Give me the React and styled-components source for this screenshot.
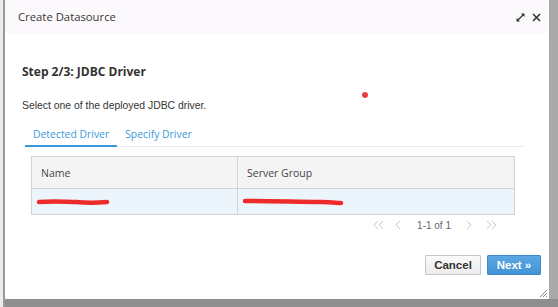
import React from 'react'
import styled, { createGlobalStyle } from 'styled-components'

const GlobalStyle = createGlobalStyle`
  html, body { margin: 0; padding: 0; }
  body {
    width: 558px;
    height: 307px;
    overflow: hidden;
    background: #a3a3a3;
  }
`

const Page = styled.div`
  width: 558px;
  height: 307px;
  display: flex;
  padding-left: 5px;
  box-sizing: border-box;
  background:
    linear-gradient(to right, #ececec 0 3px, #9a9a9a 3px 5px, transparent 5px),
    linear-gradient(to bottom, #a9a9a9 0 299px, #8f8f8f 299px);
`

const Dialog = styled.div`
  position: relative;
  width: 544px;
  height: 299px;
  background: #fff;
  display: flex;
  flex-direction: column;
`

//////////Header/////////////

const Header = styled.div`
  height: 33px;
  flex: none;
  background: #fcf9fc;
  display: flex;
  align-items: center;
  justify-content: space-between;
  padding: 0 8px 0 13px;
`

const Title = styled.span`
  font-family: "Open Sans", sans-serif;
  font-size: 11.3px;
  color: #363636;
`

const HeaderIcons = styled.div`
  display: flex;
  align-items: center;
  gap: 7px;
  padding-top: 2px;
`

//////////Body/////////////

const Body = styled.div`
  flex: 1;
  padding: 0 25px 0 17px;
  display: flex;
  flex-direction: column;
`

const Step = styled.h2`
  margin: 31px 0 0;
  font-family: "Open Sans", sans-serif;
  font-weight: 700;
  font-size: 12px;
  line-height: 16px;
  color: #333;
`

const Hint = styled.p`
  margin: 19px 0 0;
  font-family: "Liberation Sans", Arial, sans-serif;
  font-size: 10.4px;
  line-height: 14px;
  color: #333;
`

const Tabs = styled.div`
  margin: 14px 0 0 3px;
  display: flex;
  border-bottom: 1px solid #ececec;
`

const Tab = styled.div`
  padding: 0 8px 4px;
  margin-bottom: -1px;
  font-family: "Open Sans", sans-serif;
  font-size: 10.4px;
  line-height: 14px;
  color: #3a9ad9;
  border-bottom: 2px solid ${p => (p.$active ? '#3a9ad9' : 'transparent')};
`

const Table = styled.div`
  margin: 9px 9px 0 9px;
  border: 1px solid #d3d3d3;
  display: grid;
  grid-template-columns: 205px 1fr;
`

const Cell = styled.div`
  height: ${p => (p.$head ? '31px' : '25px')};
  display: flex;
  align-items: center;
  padding-left: ${p => (p.$head ? '9px' : '4px')};
  background: ${p => (p.$head ? '#f4f4f4' : '#edf5fc')};
  border-left: ${p => (p.$first ? 'none' : '1px solid #d3d3d3')};
  border-bottom: ${p => (p.$head ? '1px solid #d3d3d3' : 'none')};
  font-family: "Open Sans", sans-serif;
  font-size: 10.5px;
  color: #444;
`

const Pager = styled.div`
  height: 20px;
  display: flex;
  align-items: center;
  justify-content: flex-end;
  padding-right: 27px;
  font-family: "Liberation Sans", Arial, sans-serif;
  font-size: 10px;
  color: #666;
`

const Chevron = styled.svg`
  flex: none;
  margin: ${p => p.$m || '0'};
`

//////////Footer/////////////

const Footer = styled.div`
  display: flex;
  justify-content: flex-end;
  gap: 6px;
  padding: 0 8px 24px 0;
`

const Button = styled.button`
  height: 20px;
  padding: 0;
  width: ${p => (p.$primary ? '54px' : '56px')};
  font-family: "Liberation Sans", Arial, sans-serif;
  font-weight: 700;
  font-size: 11.5px;
  color: ${p => (p.$primary ? '#fff' : '#333')};
  background: ${p =>
    p.$primary ? 'linear-gradient(#5aa7e2, #4393d5)' : 'linear-gradient(#fafafa, #ececec)'};
  border: 1px solid ${p => (p.$primary ? '#3e8acb' : '#c6c6c6')};
  border-radius: 1px;
`

const RedDot = styled.span`
  position: absolute;
  left: 357px;
  top: 92px;
  width: 6px;
  height: 6px;
  border-radius: 50%;
  background: #e8403f;
`

const Grip = styled.svg`
  position: absolute;
  right: 1px;
  bottom: 1px;
`

const Scribble = ({ w, d }) => (
  <svg width={w} height="10" viewBox={`0 0 ${w} 10`}>
    <path d={d} stroke="#ee2b2b" strokeWidth="4.5" strokeLinecap="round" fill="none" />
  </svg>
)

const ExpandIcon = () => (
  <svg width="9" height="9" viewBox="0 0 9 9">
    <path d="M1.5 7.5 L7.5 1.5" stroke="#333" strokeWidth="1.2" />
    <path d="M0.5 5 V8.5 H4 Z M5 0.5 H8.5 V4 Z" fill="#333" />
  </svg>
)

const CloseIcon = () => (
  <svg width="9" height="9" viewBox="0 0 9 9">
    <path d="M1 1 L8 8 M8 1 L1 8" stroke="#333" strokeWidth="1.6" />
  </svg>
)

const arrows = {
  first: 'M5 1 L1 5 L5 9 M10 1 L6 5 L10 9',
  prev: 'M5 1 L1 5 L5 9',
  next: 'M1 1 L5 5 L1 9',
  last: 'M1 1 L5 5 L1 9 M6 1 L10 5 L6 9',
}

const PagerIcon = ({ kind, m }) => {
  const w = kind === 'first' || kind === 'last' ? 11 : 6
  return (
    <Chevron $m={m} width={w} height="10" viewBox={`0 0 ${w} 10`}>
      <path d={arrows[kind]} stroke="#c9c9c9" strokeWidth="1" fill="none" />
    </Chevron>
  )
}

const App = () => {
  return (
    <Page>
      <GlobalStyle />
      <Dialog>
        <Header>
          <Title>Create Datasource</Title>
          <HeaderIcons>
            <ExpandIcon />
            <CloseIcon />
          </HeaderIcons>
        </Header>
        <Body>
          <Step>Step 2/3: JDBC Driver</Step>
          <Hint>Select one of the deployed JDBC driver.</Hint>
          <Tabs>
            <Tab $active>Detected Driver</Tab>
            <Tab>Specify Driver</Tab>
          </Tabs>
          <Table>
            <Cell $head $first>Name</Cell>
            <Cell $head>Server Group</Cell>
            <Cell $first>
              <Scribble w={74} d="M3 5 C20 4 30 5 40 5 C50 6 60 6 71 5" />
            </Cell>
            <Cell>
              <Scribble w={102} d="M3 4 C30 4 60 5 80 5 C90 5 95 6 99 6" />
            </Cell>
          </Table>
          <Pager>
            <PagerIcon kind="first" />
            <PagerIcon kind="prev" m="0 16px 0 11px" />
            <span>1-1 of 1</span>
            <PagerIcon kind="next" m="0 14px 0 15px" />
            <PagerIcon kind="last" />
          </Pager>
        </Body>
        <Footer>
          <Button>Cancel</Button>
          <Button $primary>Next »</Button>
        </Footer>
        <RedDot />
        <Grip width="9" height="9" viewBox="0 0 9 9">
          <path d="M8 1 L1 8 M8 4 L4 8 M8 7 L7 8" stroke="#888" strokeWidth="1" />
        </Grip>
      </Dialog>
    </Page>
  )
}

export default App
